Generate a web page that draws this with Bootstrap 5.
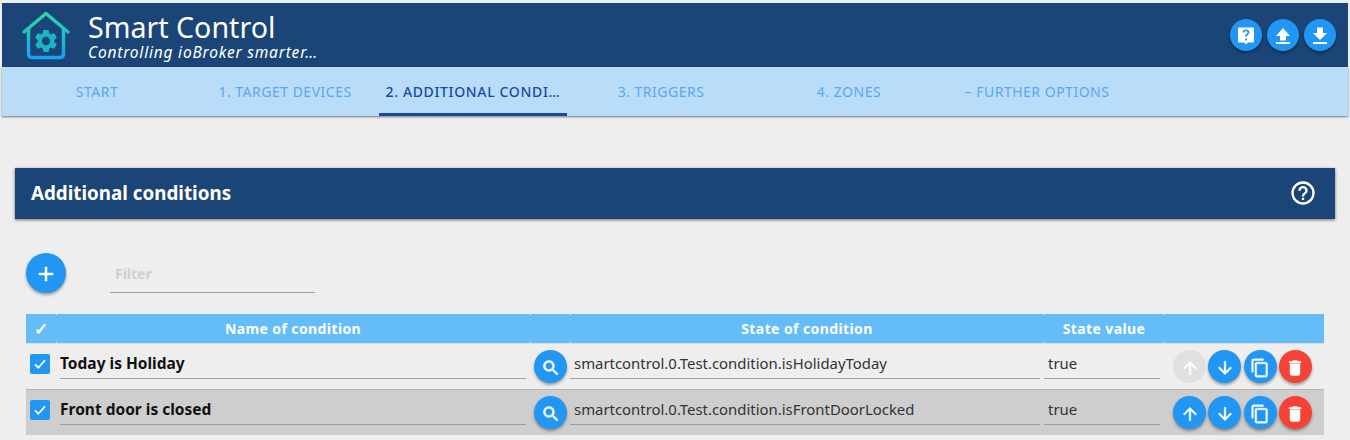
<!DOCTYPE html>
<html lang="en">
<head>
  <meta charset="UTF-8">
  <meta name="viewport" content="width=device-width, initial-scale=1.0">
  <title>Smart Control</title>
  <link href="https://cdn.jsdelivr.net/npm/bootstrap@5.3.3/dist/css/bootstrap.min.css" rel="stylesheet">
  <style>
    html, body {
      height: 440px;
      overflow: hidden;
    }
    body {
      background-color: #eeeeee;
      font-family: "Noto Sans", "Open Sans", sans-serif;
      padding: 3px 2px 0;
    }
    .app-head {
      background-color: #1a4576;
      height: 64px;
      color: #fff;
      padding-left: 19px;
      padding-right: 12px;
    }
    .app-logo {
      width: 50px;
      height: 50px;
      margin-right: 17px;
    }
    .app-title {
      font-size: 28.6px;
      line-height: 30px;
      margin-top: 3px;
    }
    .app-sub {
      font-size: 15.5px;
      line-height: 18px;
      margin-top: 1px;
      font-style: italic;
      letter-spacing: .8px;
    }
    .round-btn {
      width: 32px;
      height: 32px;
      border-radius: 50%;
      border: 0;
      padding: 0;
      background-color: #2196f3;
      box-shadow: 0 2px 3px rgba(0, 0, 0, .35);
      flex: none;
    }
    .round-btn svg {
      width: 20px;
      height: 20px;
      fill: #fff;
      stroke: #fff;
      stroke-width: .5;
    }
    .app-head .round-btn svg {
      width: 24px;
      height: 24px;
      stroke: none;
    }
    .round-btn.is-red {
      background-color: #f44336;
    }
    .round-btn.is-off {
      background-color: #e0e0e0;
      box-shadow: none;
    }
    .head-btns {
      gap: 5px;
    }
    .tab-bar {
      background-color: #b9ddf9;
      height: 49px;
      padding-left: 1px;
      box-shadow: 0 1px 2px rgba(0, 0, 0, .5);
    }
    .tab-item {
      width: 188px;
      color: #58a8ee;
      font-size: 14px;
      letter-spacing: .5px;
      border-bottom: 3px solid transparent;
      padding-top: 2px;
    }
    .tab-item.is-on {
      color: #154ba0;
      font-weight: 500;
      letter-spacing: .65px;
      border-bottom-color: #154ba0;
    }
    .sec-head {
      background-color: #1a4576;
      color: #fff;
      height: 51px;
      margin: 52px 13px 0;
      padding: 0 18px 0 16px;
      box-shadow: 0 1px 3px rgba(0, 0, 0, .55);
      font-size: 18.8px;
      font-weight: 700;
    }
    .sec-head svg {
      width: 28px;
      height: 28px;
      margin-bottom: 2px;
      fill: #fff;
    }
    .filter-row {
      margin: 34px 0 0 24px;
      height: 61px;
    }
    .add-btn {
      width: 40px;
      height: 40px;
    }
    .add-btn svg {
      width: 24px;
      height: 24px;
    }
    .filter-box {
      width: 205px;
      height: 40px;
      margin-left: 44px;
      border-bottom: 1px solid #9e9e9e;
      color: #d0d0d0;
      font-size: 14px;
      font-weight: 700;
      padding: 10px 0 0 5px;
    }
    .cond-table {
      width: 1298px;
      margin-left: 24px;
      table-layout: fixed;
      border-collapse: collapse;
    }
    .cond-table th {
      background-color: #64bdf6;
      background-image: linear-gradient(#e3f2fd, #e3f2fd), linear-gradient(#e3f2fd, #e3f2fd);
      background-size: 1px 1px;
      background-position: left top, left bottom;
      background-repeat: no-repeat;
      color: #fff;
      height: 29px;
      padding: 0;
      font-size: 14px;
      font-weight: 700;
      text-align: center;
      letter-spacing: .4px;
      border-bottom: 1px solid #dcdcdc;
    }
    .cond-table th:first-child {
      background-image: none;
      font-size: 17px;
    }
    .cond-table td {
      height: 46px;
      padding: 0;
      vertical-align: top;
      border-bottom: 1px solid #b5b5b5;
    }
    .cond-table tr:last-child td {
      border-bottom: 0;
    }
    .row-alt td {
      background-color: #cecece;
    }
    .tick-box {
      width: 20px;
      height: 20px;
      margin: 10px 0 0 4px;
      border-radius: 2px;
      background-color: #2196f3;
    }
    .tick-box svg {
      width: 20px;
      height: 20px;
      display: block;
    }
    .cell-text {
      height: 35px;
      line-height: 38px;
      margin-right: 4px;
      padding-left: 4px;
      border-bottom: 1px solid #9e9e9e;
      font-size: 14.9px;
      color: #333;
      white-space: nowrap;
      overflow: hidden;
    }
    .cell-text.is-name {
      margin-left: 4px;
      padding-left: 0;
      color: #111;
      font-weight: 700;
      font-size: 15.500px;
    }
    .round-btn.in-row {
      width: 33px;
      height: 33px;
    }
    .search-cell .round-btn {
      display: block;
      margin: 6px 0 0 4px;
    }
    .search-cell .round-btn svg {
      stroke-width: .8;
    }
    .act-wrap {
      gap: 2.3px;
      padding: 6px 0 0 9px;
    }
  </style>
</head>
<body>

  <header class="app-head d-flex align-items-center">
    <svg class="app-logo" viewBox="0 0 50 50" fill="none">
      <defs>
        <linearGradient id="logoGrad" x1="0" y1="0" x2="0" y2="1">
          <stop offset="0" stop-color="#2fd8a0"/>
          <stop offset="1" stop-color="#14a3f5"/>
        </linearGradient>
      </defs>
      <path d="M3 22 L25 3.500 L47 22 M7.500 19 V44 Q7.500 47.500 11 47.500 H39 Q42.500 47.500 42.500 44 V19" stroke="url(#logoGrad)" stroke-width="3.400" stroke-linecap="round" stroke-linejoin="round"/>
      <g transform="translate(25 31) scale(1.15) translate(-12 -12)">
        <path fill="#17b6c9" d="M19.14 12.94c.04-.3.06-.61.06-.94s-.02-.64-.07-.94l2.03-1.58a.5.5 0 0 0 .12-.61l-1.92-3.32a.5.5 0 0 0-.59-.22l-2.39.96a7 7 0 0 0-1.62-.94l-.36-2.54a.5.5 0 0 0-.48-.41h-3.84a.5.5 0 0 0-.47.41l-.36 2.54a7.4 7.4 0 0 0-1.62.94l-2.39-.96a.5.5 0 0 0-.59.22L2.74 8.87a.5.5 0 0 0 .12.61l2.03 1.58c-.05.3-.09.63-.09.94s.02.64.07.94l-2.03 1.58a.5.5 0 0 0-.12.61l1.92 3.32c.12.22.37.29.59.22l2.39-.96c.5.38 1.03.7 1.62.94l.36 2.54c.05.24.24.41.48.41h3.84c.24 0 .44-.17.47-.41l.36-2.54a7 7 0 0 0 1.62-.94l2.39.96c.22.08.47 0 .59-.22l1.92-3.32a.5.5 0 0 0-.12-.61zM12 15.6a3.6 3.6 0 1 1 0-7.2 3.6 3.6 0 0 1 0 7.2z"/>
      </g>
    </svg>
    <div class="flex-grow-1">
      <div class="app-title">Smart Control</div>
      <div class="app-sub">Controlling ioBroker smarter…</div>
    </div>
    <div class="head-btns d-flex">
      <button class="round-btn" type="button"><svg viewBox="0 0 24 24"><path d="M5 3.500h14a1 1 0 0 1 1 1v13a1 1 0 0 1-1 1h-5l-2 2-2-2H5a1 1 0 0 1-1-1v-13a1 1 0 0 1 1-1zm6 11v2h2v-2h-2zm1-9c-2 0-3.500 1.200-3.500 3h2c0-.9.600-1.300 1.500-1.300s1.500.5 1.500 1.200c0 1.400-2.500 1.500-2.500 4.100h2c0-1.800 2.500-2 2.500-4.200C15.500 6.500 14 5.500 12 5.500z"/></svg></button>
      <button class="round-btn" type="button"><svg viewBox="0 0 24 24"><path d="M5 20h14v-2H5v2zM12 4l-7 8h4v4.500h6V12h4z"/></svg></button>
      <button class="round-btn" type="button"><svg viewBox="0 0 24 24"><path d="M5 20h14v-2H5v2zM19 9h-4V3.500H9V9H5l7 7z"/></svg></button>
    </div>
  </header>

  <nav class="tab-bar d-flex">
    <div class="tab-item d-flex align-items-center justify-content-center">START</div>
    <div class="tab-item d-flex align-items-center justify-content-center">1. TARGET DEVICES</div>
    <div class="tab-item is-on d-flex align-items-center justify-content-center">2. ADDITIONAL CONDI…</div>
    <div class="tab-item d-flex align-items-center justify-content-center">3. TRIGGERS</div>
    <div class="tab-item d-flex align-items-center justify-content-center">4. ZONES</div>
    <div class="tab-item d-flex align-items-center justify-content-center">– FURTHER OPTIONS</div>
  </nav>

  <div class="sec-head d-flex align-items-center justify-content-between">
    <span>Additional conditions</span>
    <svg viewBox="0 0 24 24"><path d="M11 18h2v-2h-2v2zm1-16a10 10 0 1 0 0 20 10 10 0 0 0 0-20zm0 18a8 8 0 1 1 0-16 8 8 0 0 1 0 16zm0-14a4 4 0 0 0-4 4h2a2 2 0 1 1 4 0c0 2-3 1.750-3 5h2c0-2.250 3-2.500 3-5a4 4 0 0 0-4-4z"/></svg>
  </div>

  <div class="filter-row d-flex">
    <button class="round-btn add-btn" type="button"><svg viewBox="0 0 24 24"><path d="M19 13h-6v6h-2v-6H5v-2h6V5h2v6h6v2z"/></svg></button>
    <div class="filter-box">Filter</div>
  </div>

  <table class="cond-table">
    <colgroup>
      <col style="width:30px"><col style="width:474px"><col style="width:40px"><col style="width:474px"><col style="width:120px"><col style="width:160px">
    </colgroup>
    <thead>
      <tr>
        <th>✓</th><th>Name of condition</th><th></th><th>State of condition</th><th>State value</th><th></th>
      </tr>
    </thead>
    <tbody>
      <tr>
        <td><div class="tick-box"><svg viewBox="0 0 24 24"><path d="M6 12.500l4 4 8-9" fill="none" stroke="#fff" stroke-width="2.200"/></svg></div></td>
        <td><div class="cell-text is-name">Today is Holiday</div></td>
        <td class="search-cell"><button class="round-btn in-row" type="button"><svg viewBox="0 0 24 24"><path d="M15.500 14h-.79l-.28-.27A6.470 6.470 0 0 0 16 9.500 6.500 6.500 0 1 0 9.500 16c1.610 0 3.090-.59 4.230-1.570l.27.28v.79l5 4.990L20.490 19l-4.990-5zm-6 0a4.500 4.500 0 1 1 0-9 4.500 4.500 0 0 1 0 9z"/></svg></button></td>
        <td><div class="cell-text">smartcontrol.0.Test.condition.isHolidayToday</div></td>
        <td><div class="cell-text">true</div></td>
        <td>
          <div class="act-wrap d-flex">
            <button class="round-btn in-row is-off" type="button"><svg viewBox="0 0 24 24"><path d="M4 12l1.410 1.410L11 7.830V20h2V7.830l5.580 5.590L20 12l-8-8z"/></svg></button>
            <button class="round-btn in-row" type="button"><svg viewBox="0 0 24 24"><path d="M20 12l-1.410-1.410L13 16.170V4h-2v12.170l-5.580-5.590L4 12l8 8z"/></svg></button>
            <button class="round-btn in-row" type="button"><svg viewBox="0 0 24 24"><path d="M16 1H4a2 2 0 0 0-2 2v14h2V3h12V1zm3 4H8a2 2 0 0 0-2 2v14c0 1.100.9 2 2 2h11a2 2 0 0 0 2-2V7a2 2 0 0 0-2-2zm0 16H8V7h11v14z"/></svg></button>
            <button class="round-btn in-row is-red" type="button"><svg viewBox="0 0 24 24"><path d="M6 19c0 1.100.9 2 2 2h8a2 2 0 0 0 2-2V7H6v12zM19 4h-3.500l-1-1h-5l-1 1H5v2h14V4z"/></svg></button>
          </div>
        </td>
      </tr>
      <tr class="row-alt">
        <td><div class="tick-box"><svg viewBox="0 0 24 24"><path d="M6 12.500l4 4 8-9" fill="none" stroke="#fff" stroke-width="2.200"/></svg></div></td>
        <td><div class="cell-text is-name">Front door is closed</div></td>
        <td class="search-cell"><button class="round-btn in-row" type="button"><svg viewBox="0 0 24 24"><path d="M15.500 14h-.79l-.28-.27A6.470 6.470 0 0 0 16 9.500 6.500 6.500 0 1 0 9.500 16c1.610 0 3.090-.59 4.230-1.570l.27.28v.79l5 4.990L20.490 19l-4.990-5zm-6 0a4.500 4.500 0 1 1 0-9 4.500 4.500 0 0 1 0 9z"/></svg></button></td>
        <td><div class="cell-text">smartcontrol.0.Test.condition.isFrontDoorLocked</div></td>
        <td><div class="cell-text">true</div></td>
        <td>
          <div class="act-wrap d-flex">
            <button class="round-btn in-row" type="button"><svg viewBox="0 0 24 24"><path d="M4 12l1.410 1.410L11 7.830V20h2V7.830l5.580 5.590L20 12l-8-8z"/></svg></button>
            <button class="round-btn in-row" type="button"><svg viewBox="0 0 24 24"><path d="M20 12l-1.410-1.410L13 16.170V4h-2v12.170l-5.580-5.590L4 12l8 8z"/></svg></button>
            <button class="round-btn in-row" type="button"><svg viewBox="0 0 24 24"><path d="M16 1H4a2 2 0 0 0-2 2v14h2V3h12V1zm3 4H8a2 2 0 0 0-2 2v14c0 1.100.9 2 2 2h11a2 2 0 0 0 2-2V7a2 2 0 0 0-2-2zm0 16H8V7h11v14z"/></svg></button>
            <button class="round-btn in-row is-red" type="button"><svg viewBox="0 0 24 24"><path d="M6 19c0 1.100.9 2 2 2h8a2 2 0 0 0 2-2V7H6v12zM19 4h-3.500l-1-1h-5l-1 1H5v2h14V4z"/></svg></button>
          </div>
        </td>
      </tr>
    </tbody>
  </table>

  <script src="https://cdn.jsdelivr.net/npm/bootstrap@5.3.3/dist/js/bootstrap.bundle.min.js"></script>
</body>
</html>
